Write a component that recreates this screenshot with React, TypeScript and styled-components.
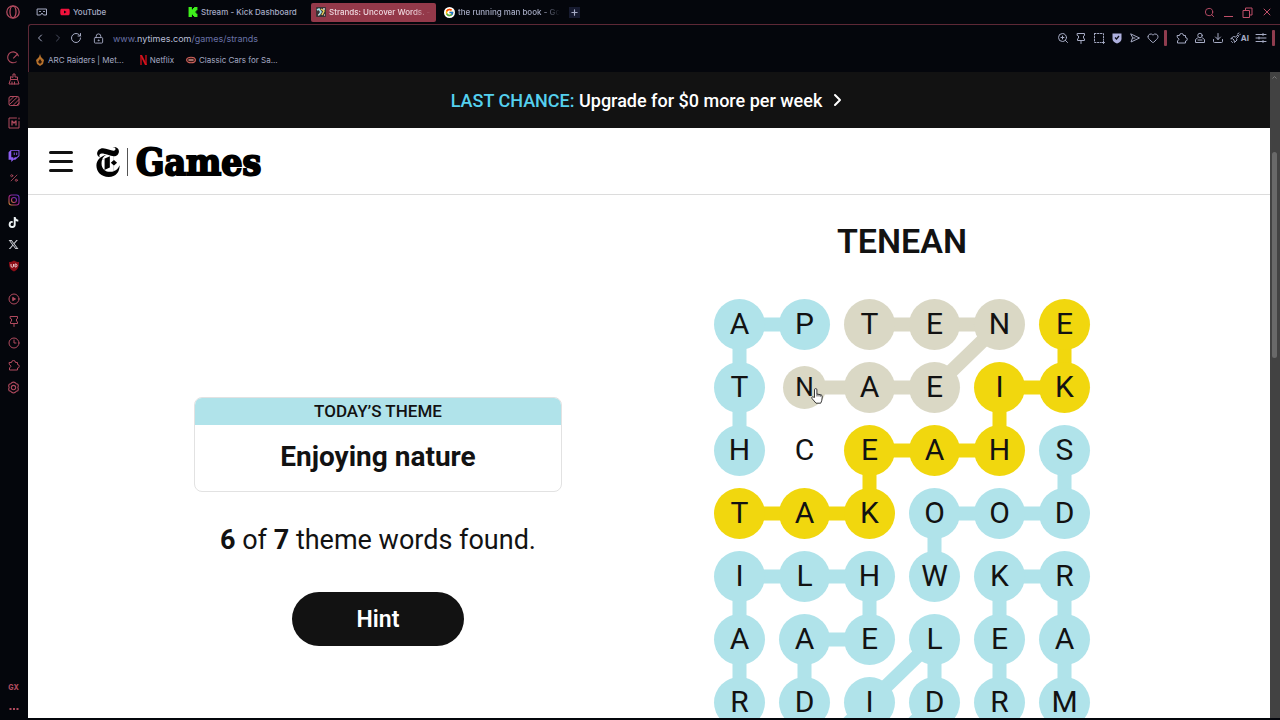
import React from "react";
import styled, { createGlobalStyle, css } from "styled-components";
import {
  Search,
  X,
  ChevronLeft,
  ChevronRight,
  RotateCw,
  LockKeyhole,
  ZoomIn,
  Heart,
  Download,
  Plus,
  Percent,
  Clock3,
} from "lucide-react";
import { FaTwitch, FaTiktok, FaXTwitter, FaYoutube } from "react-icons/fa6";
import { FcGoogle } from "react-icons/fc";
import { SiNewyorktimes, SiKick } from "react-icons/si";

const ACCENT = "#b04a5e";
const CHROME = "#04060c";
const UI_FONT = `Inter, "Liberation Sans", sans-serif`;
const PAGE_FONT = `Roboto, "Liberation Sans", sans-serif`;
const BLUE = "#b0e3ea";
const YELLOW = "#f1d70e";
const SAND = "#dad8c5";

const GlobalStyle = createGlobalStyle`
  *, *::before, *::after { box-sizing: border-box; }
  body { margin: 0; background: ${CHROME}; }
  button { border: 0; padding: 0; background: none; color: inherit; font: inherit; cursor: pointer; }
  a { color: inherit; text-decoration: none; }
  svg { display: block; flex: none; }
`;

const Browser = styled.div`
  display: flex;
  flex-direction: column;
  height: 100vh;
  padding-bottom: 2px;
  overflow: hidden;
  background: ${CHROME};
  color: #a6abc4;
  font-family: ${UI_FONT};
`;

/* ---------- tab strip ---------- */

const TitleBar = styled.header`
  display: flex;
  align-items: center;
  height: 24px;
  padding: 0 7px 0 6px;
`;

const OperaButton = styled.button`
  color: ${ACCENT};
`;

const IslandButton = styled.button`
  margin: 0 7px 0 16px;
`;

const Tabs = styled.nav`
  display: flex;
  gap: 3px;
`;

const Tab = styled.a<{ $active?: boolean; $fade?: boolean }>`
  display: flex;
  align-items: center;
  gap: 3px;
  width: 125px;
  height: 19px;
  padding: 0 5px;
  border-radius: 2px;
  font-size: 8px;
  font-weight: 500;
  white-space: nowrap;
  ${(p) => p.$active && css`background: #94394a; color: #efd9e0;`}
  span {
    flex: 1;
    ${(p) => p.$fade && css`mask-image: linear-gradient(90deg, #000 82%, transparent);`}
  }
`;

const NewTab = styled.button`
  display: grid;
  place-items: center;
  width: 11px;
  height: 11px;
  margin-left: 5px;
  background: #171b30;
`;

const WindowControls = styled.div`
  display: flex;
  gap: 8px;
  margin-left: auto;
  color: #c04f69;
`;

/* ---------- frame ---------- */

const Body = styled.div`
  display: flex;
  flex: 1;
  min-height: 0;
`;

const Sidebar = styled.aside`
  display: flex;
  flex-direction: column;
  align-items: center;
  gap: 21px;
  width: 28px;
  padding: 27px 1px 3px 0;
  color: ${ACCENT};
`;

const SideGroup = styled.div<{ $bottom?: boolean }>`
  display: flex;
  flex-direction: column;
  gap: 10px;
  ${(p) => p.$bottom && css`margin-top: auto;`}
`;

const SideButton = styled.button<{ $color?: string }>`
  display: grid;
  place-items: center;
  width: 13px;
  height: 12px;
  color: ${(p) => p.$color ?? "inherit"};
  font-size: 7px;
  font-weight: 800;
`;

const Window = styled.div`
  display: flex;
  flex: 1;
  flex-direction: column;
  min-width: 0;
`;

const Chrome = styled.div`
  border: 1px solid #5d2836;
  border-width: 1px 0 0 1px;
  border-top-left-radius: 3px;
  height: 48px;
`;

const AddressBar = styled.div`
  display: flex;
  align-items: center;
  height: 26px;
  padding: 0 5px;
`;

const NavButtons = styled.div`
  display: flex;
  gap: 6px;
  margin-right: 11px;
`;

const Url = styled.a`
  margin-left: 9px;
  color: #6a72a6;
  font-size: 9px;
  b { color: #b9bed6; font-weight: 400; }
`;

const Tools = styled.div`
  display: flex;
  align-items: center;
  gap: 6px;
`;

const ToolSpacer = styled.div`
  flex: 1;
`;

const Divider = styled.i<{ $wide?: boolean }>`
  width: 3px;
  height: 16px;
  margin: 0 ${(p) => (p.$wide ? 9 : 0)}px 0 5px;
  border-radius: 1px;
  background: #8f3c4e;
`;

const AiButton = styled.button`
  display: flex;
  align-items: center;
  font-size: 8px;
  font-weight: 700;
`;

const Bookmarks = styled.nav`
  display: flex;
  align-items: flex-start;
  gap: 12px;
  padding: 3px 0 0 6px;
  font-size: 8px;
  line-height: 12px;
  a { display: flex; align-items: center; gap: 3px; white-space: nowrap; }
  a:first-child { margin-right: 4px; }
`;

const Viewport = styled.div`
  display: flex;
  flex: 1;
  min-height: 0;
`;

const ScrollTrack = styled.div`
  width: 10px;
  padding: 3px 3px 0 2px;
  background: #424242;
`;

const ScrollThumb = styled.div`
  height: 206px;
  margin-top: 72px;
  border-radius: 3px;
  background: #696969;
`;

/* ---------- page ---------- */

const Page = styled.div`
  flex: 1;
  min-width: 0;
  overflow: hidden;
  background: #fff;
  color: #121212;
  font-family: ${PAGE_FONT};
`;

const Banner = styled.a`
  display: flex;
  align-items: center;
  justify-content: center;
  gap: 7px;
  height: 56px;
  padding-right: 2px;
  background: #121212;
  color: #fff;
  font-size: 18px;
  font-weight: 500;
  em { color: #55d0ee; font-style: normal; }
`;

const SiteHeader = styled.header`
  display: flex;
  align-items: center;
  height: 67px;
  padding-left: 20px;
  border-bottom: 1px solid #dcdcdc;
`;

const Brand = styled.a`
  display: flex;
  align-items: center;
  margin-left: 19px;
  padding-top: 2px;
  color: #000;
  font: 900 37px/40px "DejaVu Serif Condensed", "DejaVu Serif", serif;
  -webkit-text-stroke: 2px #000;
`;

const BrandRule = styled.i`
  width: 1px;
  height: 28px;
  margin: 0 8px 0 4px;
  background: #555;
`;

const Game = styled.main`
  display: grid;
  grid-template-columns: 1fr 1fr;
  padding: 0 106px 0 88px;
`;

const Status = styled.section`
  display: flex;
  flex-direction: column;
  align-items: center;
  padding-top: 202px;
`;

const ThemeCard = styled.div`
  width: 100%;
  max-width: 368px;
  overflow: hidden;
  border: 1px solid #e2e2e2;
  border-radius: 8px;
  text-align: center;
`;

const ThemeLabel = styled.h2`
  margin: -1px -1px 0;
  background: ${BLUE};
  font-size: 17px;
  font-weight: 500;
  line-height: 28px;
`;

const ThemeTitle = styled.p`
  margin: 0;
  font-size: 28px;
  font-weight: 700;
  line-height: 64px;
  padding-bottom: 2px;
`;

const Progress = styled.p`
  margin: 30px 0 34px;
  font-size: 27px;
  line-height: 36px;
`;

const HintButton = styled.button`
  width: 172px;
  height: 54px;
  border-radius: 27px;
  background: #121212;
  color: #fff;
  font-size: 23px;
  font-weight: 600;
`;

const Play = styled.section`
  display: flex;
  flex-direction: column;
  align-items: center;
  padding-top: 24px;
`;

const CurrentWord = styled.h1`
  margin: 0 0 30px;
  font-size: 34px;
  font-weight: 600;
  line-height: 44px;
`;

const Board = styled.div`
  position: relative;
  display: grid;
  grid-template-columns: repeat(6, 65px);
  grid-auto-rows: 63px;
  place-items: center;
`;

const Links = styled.svg`
  position: absolute;
  inset: 0;
  overflow: visible;
`;

const Letter = styled.button<{ $fill: string; $small?: boolean }>`
  position: relative;
  width: ${(p) => (p.$small ? 43 : 51)}px;
  height: ${(p) => (p.$small ? 43 : 51)}px;
  padding-bottom: 2px;
  border-radius: 50%;
  background: ${(p) => p.$fill};
  font-size: ${(p) => (p.$small ? 26 : 30)}px;
  line-height: 30px;
`;

const Pointer = styled.svg`
  position: absolute;
  left: 28px;
  top: 22px;
`;

const ROWS = ["APTENE", "TNAEIK", "HCEAHS", "TAKOOD", "ILHWKR", "AAELEA", "RDIDRM"];

const FILLS = ["bbsssy", "bsssyy", "b-yyyb", "yyybbb", "bbbbbb", "bbbbbb", "bbbbbb"];

const COLORS: Record<string, string> = { b: BLUE, y: YELLOW, s: SAND, "-": "transparent" };

/* each chain lists the cells it passes as "column row" pairs */
const CHAINS: { color: string; cells: [number, number][] }[] = [
  { color: BLUE, cells: [[1, 0], [0, 0], [0, 1], [0, 2]] },
  { color: SAND, cells: [[2, 0], [3, 0], [4, 0], [3, 1], [2, 1], [1, 1]] },
  { color: YELLOW, cells: [[5, 0], [5, 1], [4, 1], [4, 2], [3, 2], [2, 2], [2, 3], [1, 3], [0, 3]] },
  { color: BLUE, cells: [[5, 2], [5, 3], [4, 3], [3, 3], [3, 4]] },
  { color: BLUE, cells: [[0, 6], [0, 5], [0, 4], [1, 4], [2, 4], [2, 5], [1, 5], [1, 6]] },
  { color: BLUE, cells: [[1, 7], [2, 6], [3, 5], [3, 6], [2, 7]] },
  { color: BLUE, cells: [[4, 6], [4, 5], [4, 4], [5, 4], [5, 5], [5, 6]] },
];

const toPoints = (cells: [number, number][]) =>
  cells.map(([c, r]) => `${c * 65 + 32.5},${r * 63 + 31.5}`).join(" ");

/* ---------- small drawings ---------- */

const line = {
  fill: "none",
  stroke: "currentColor",
  strokeWidth: 2,
  strokeLinecap: "round" as const,
  strokeLinejoin: "round" as const,
};

const OperaIcon = () => (
  <svg width="14" height="14" viewBox="0 0 14 14" fill="none" stroke="currentColor" strokeWidth="1.3">
    <circle cx="7" cy="7" r="6.2" />
    <ellipse cx="7" cy="7" rx="3" ry="5.800" />
  </svg>
);
const IslandIcon = () => (
  <svg width="12" height="12" viewBox="0 0 24 24" {...line}>
    <path d="M3 6h18v12h-6l-3-4-3 4H3z" />
    <path d="M7 11h2M15 11h2" />
  </svg>
);
const StrandsIcon = () => (
  <svg width="10" height="10" viewBox="0 0 10 10">
    <rect width="10" height="10" rx="1" fill="#3b3335" />
    <path d="M1 3l2-1 2 3-2 3" stroke="#9fe0e6" strokeWidth="1.6" fill="none" />
    <path d="M5 2l3 2-2 4" stroke="#e8d35a" strokeWidth="1.4" fill="none" />
    <path d="M8 1v2M2 8h1M8 8h1" stroke="#fff" strokeWidth="1.2" />
  </svg>
);
const GoogleIcon = () => (
  <svg width="11" height="11" viewBox="0 0 48 48">
    <circle cx="24" cy="24" r="24" fill="#fff" />
    <FcGoogle x={4} y={4} size={40} />
  </svg>
);
const FlameIcon = () => (
  <svg width="10" height="12" viewBox="0 0 10 12">
    <path d="M5 0l1 3 3 3-1 4-3 2-3-2-1-4 3-3z" fill="#b5712c" />
    <path d="M5 5l2 3-2 2-2-2z" fill="#2a1408" />
  </svg>
);
const NetflixIcon = () => (
  <svg width="7" height="10" viewBox="0 0 7 10">
    <path d="M0 0h2v10H0zM5 0h2v10H5z" fill="#8d0b13" />
    <path d="M0 0h2l5 10H5z" fill="#d5121d" />
  </svg>
);
const RingIcon = () => (
  <svg width="10" height="8" viewBox="0 0 10 8">
    <ellipse cx="5" cy="4" rx="4.4" ry="2.8" fill="#3a1614" stroke="#d0625c" strokeWidth="1.1" />
    <path d="M2.5 4h5" stroke="#e6b0aa" strokeWidth="1.2" />
  </svg>
);
const ShieldIcon = () => (
  <svg width="12" height="12" viewBox="0 0 24 24">
    <path d="M3 3h18v11c0 4-4 7-9 9-5-2-9-5-9-9z" fill="#aeb0de" />
    <path d="M8 11l3 3 5-6" fill="none" stroke="#0a0c18" strokeWidth="2.4" />
  </svg>
);
const SnapshotIcon = () => (
  <svg width="12" height="12" viewBox="0 0 24 24" {...line}>
    <path d="M3 3h18v13M3 3v18h13" strokeDasharray="3 3" />
    <path d="M21 18v5M18 21h5" />
  </svg>
);
const SendIcon = () => (
  <svg width="12" height="12" viewBox="0 0 24 24" {...line}>
    <path d="M4 4l17 8-17 8 3-8zM7 12h5" />
  </svg>
);
const PinIcon = () => (
  <svg width="12" height="12" viewBox="0 0 24 24" {...line}>
    <path d="M5 3h14v4l-2 1v4l2 2v3H5v-3l2-2V8L5 7zM12 17v6" />
  </svg>
);
const PuzzleIcon = () => (
  <svg width="12" height="12" viewBox="0 0 24 24" {...line}>
    <path d="M3 7h4a4 4 0 0 1 8 0h4v4a3.500 3.500 0 0 1 0 7v4H3v-4l3-3.500-3-3.500z" />
  </svg>
);
const ProfileIcon = () => (
  <svg width="12" height="12" viewBox="0 0 24 24" {...line}>
    <circle cx="12" cy="7" r="4.5" />
    <path d="M7 12l-4 3v6h18v-6l-4-3M8 16h8" />
  </svg>
);
const RocketIcon = () => (
  <svg width="11" height="12" viewBox="0 0 22 24" {...line}>
    <path d="M2 13l5-4 4 1 5-4 1 3-4 4 1 3-5 5-1-5-2-2zM15 4l3-2M19 6l2-2M3 19l2 2" />
  </svg>
);
const TuneIcon = () => (
  <svg width="12" height="12" viewBox="0 0 24 24" {...line}>
    <path d="M2 5h20M2 12h20M2 19h20M16 3v4M8 10v4M16 17v4" />
  </svg>
);
const GaugeIcon = () => (
  <svg width="13" height="13" viewBox="0 0 24 24" {...line}>
    <path d="M17 20a10 10 0 1 1 4-11M12 13l7-7" />
  </svg>
);
const CleanerIcon = () => (
  <svg width="12" height="12" viewBox="0 0 24 24" {...line}>
    <path d="M10 8V2h4v6h5v5H5V8zM5 13l-3 9h20l-3-9M8 22v-4M13 22v-4" />
  </svg>
);
const PatternIcon = () => (
  <svg width="12" height="12" viewBox="0 0 24 24" {...line}>
    <rect x="2" y="3" width="20" height="18" rx="3" />
    <path d="M3 12l9-9M3 19L19 4M10 21L22 9M17 21l5-5" />
  </svg>
);
const ModsIcon = () => (
  <svg width="12" height="12" viewBox="0 0 24 24" {...line}>
    <path d="M17 2H2v20h20V9M22 2v2" />
    <path d="M8 16V8l4 4 4-4v8" strokeWidth="2.6" />
  </svg>
);
const CameraIcon = () => (
  <svg width="12" height="12" viewBox="0 0 24 24" fill="none" stroke="url(#camera)" strokeWidth="2.2">
    <defs>
      <linearGradient id="camera" x1="1" y1="0" x2="0" y2="1">
        <stop offset="0" stopColor="#5a2fc4" />
        <stop offset="0.6" stopColor="#a8267f" />
        <stop offset="1" stopColor="#c98a2c" />
      </linearGradient>
    </defs>
    <rect x="2" y="2" width="20" height="20" rx="5" />
    <circle cx="12" cy="12" r="5" />
    <path d="M17 6.500h1" />
  </svg>
);
const BlockerIcon = () => (
  <svg width="12" height="12" viewBox="0 0 24 24">
    <path d="M12 1c4 3 7 3 10 3 0 10-2 15-10 19C4 19 2 14 2 4c3 0 6 0 10-3z" fill="#8d0d17" />
    <path d="M6 8v4a2 2 0 0 0 5 0V8M14 8v6h1a3 3 0 0 0 0-6z" fill="none" stroke="#e9c9cc" strokeWidth="2" />
  </svg>
);
const PlayerIcon = () => (
  <svg width="12" height="12" viewBox="0 0 24 24" {...line}>
    <circle cx="12" cy="12" r="10" />
    <path d="M10 9l5 3-5 3z" fill="currentColor" />
  </svg>
);
const NutIcon = () => (
  <svg width="13" height="13" viewBox="0 0 24 24" {...line}>
    <path d="M9 3l3-1 3 1 2 2 3 1 1 3-1 3 1 3-1 3-3 1-2 2-3 1-3-1-2-2-3-1-1-3 1-3-1-3 1-3 3-1z" />
    <circle cx="12" cy="12" r="4" />
  </svg>
);
const DotsIcon = () => (
  <svg width="12" height="4" viewBox="0 0 12 4" fill="currentColor">
    <path d="M1.500 1h2v2h-2zM5 1h2v2H5zM8.500 1h2v2h-2z" />
  </svg>
);

const TABS = [
  { label: "YouTube", icon: <FaYoutube size={10} color="#f0123c" /> },
  { label: "Stream - Kick Dashboard", icon: <SiKick size={10} color="#3ff01c" /> },
  { label: "Strands: Uncover Words. -", icon: <StrandsIcon />, active: true, fade: true },
  { label: "the running man book - Go", icon: <GoogleIcon />, fade: true },
];

export default function App() {
  return (
    <Browser>
      <GlobalStyle />
      <TitleBar>
        <OperaButton aria-label="Opera menu"><OperaIcon /></OperaButton>
        <IslandButton aria-label="Workspaces"><IslandIcon /></IslandButton>
        <Tabs>
          {TABS.map((t) => (
            <Tab key={t.label} href="#" $active={t.active} $fade={t.fade}>
              {t.icon}
              <span>{t.label}</span>
            </Tab>
          ))}
        </Tabs>
        <NewTab aria-label="New tab"><Plus size={9} strokeWidth={3} /></NewTab>
        <WindowControls>
          <button aria-label="Search tabs"><Search size={11} /></button>
          <button aria-label="Minimise"><svg width="11" height="11" viewBox="0 0 11 11"><path d="M1 9.500h9" stroke="currentColor" /></svg></button>
          <button aria-label="Restore"><svg width="11" height="11" viewBox="0 0 11 11" fill="none" stroke="currentColor"><path d="M1 3.500h6.500v7H1zM3.500 3.500v-2.500h6.500v7H7.500" /></svg></button>
          <button aria-label="Close"><X size={12} strokeWidth={2} /></button>
        </WindowControls>
      </TitleBar>

      <Body>
        <Sidebar>
          <SideGroup>
            <SideButton aria-label="GX Control"><GaugeIcon /></SideButton>
            <SideButton aria-label="GX Cleaner"><CleanerIcon /></SideButton>
            <SideButton aria-label="Wallpapers"><PatternIcon /></SideButton>
            <SideButton aria-label="Mods"><ModsIcon /></SideButton>
          </SideGroup>
          <SideGroup>
            <SideButton aria-label="Twitch" $color="#8d5cf0"><FaTwitch size={12} /></SideButton>
            <SideButton aria-label="Deals"><Percent size={10} /></SideButton>
            <SideButton aria-label="Instagram"><CameraIcon /></SideButton>
            <SideButton aria-label="TikTok" $color="#eef3f5"><FaTiktok size={11} /></SideButton>
            <SideButton aria-label="X" $color="#c9cbd2"><FaXTwitter size={11} /></SideButton>
            <SideButton aria-label="Ad blocker"><BlockerIcon /></SideButton>
          </SideGroup>
          <SideGroup>
            <SideButton aria-label="Player"><PlayerIcon /></SideButton>
            <SideButton aria-label="Pinboards"><PinIcon /></SideButton>
            <SideButton aria-label="History"><Clock3 size={12} /></SideButton>
            <SideButton aria-label="Extensions"><PuzzleIcon /></SideButton>
            <SideButton aria-label="Settings"><NutIcon /></SideButton>
          </SideGroup>
          <SideGroup $bottom>
            <SideButton>GX</SideButton>
            <SideButton aria-label="More"><DotsIcon /></SideButton>
          </SideGroup>
        </Sidebar>

        <Window>
          <Chrome>
            <AddressBar>
              <NavButtons>
                <button aria-label="Back"><ChevronLeft size={12} /></button>
                <button aria-label="Forward"><ChevronRight size={12} color="#4a4e60" /></button>
                <button aria-label="Reload"><RotateCw size={12} /></button>
              </NavButtons>
              <LockKeyhole size={11} />
              <Url href="#">www.<b>nytimes.com</b>/games/strands</Url>
              <ToolSpacer />
              <Tools>
                <button aria-label="Zoom"><ZoomIn size={12} /></button>
                <button aria-label="Pin page"><PinIcon /></button>
                <button aria-label="Snapshot"><SnapshotIcon /></button>
                <button aria-label="Privacy"><ShieldIcon /></button>
                <button aria-label="Send"><SendIcon /></button>
                <button aria-label="Favourite"><Heart size={12} /></button>
              </Tools>
              <Divider $wide />
              <Tools>
                <button aria-label="Extensions"><PuzzleIcon /></button>
                <button aria-label="Profile"><ProfileIcon /></button>
                <button aria-label="Downloads"><Download size={12} /></button>
                <AiButton><RocketIcon />AI</AiButton>
                <button aria-label="Easy setup"><TuneIcon /></button>
              </Tools>
              <Divider />
            </AddressBar>
            <Bookmarks>
              <a href="#"><FlameIcon />ARC Raiders | Met...</a>
              <a href="#"><NetflixIcon />Netflix</a>
              <a href="#"><RingIcon />Classic Cars for Sa...</a>
            </Bookmarks>
          </Chrome>

          <Viewport>
            <Page>
              <Banner href="#">
                <span><em>LAST CHANCE:</em> Upgrade for $0 more per week</span>
                <svg width="16" height="16" viewBox="0 0 16 16" {...line}><path d="M6 3l5 5-5 5" /></svg>
              </Banner>
              <SiteHeader>
                <button aria-label="Menu">
                  <svg width="26" height="24" viewBox="0 0 26 24" {...line} strokeWidth={3}>
                    <path d="M2.500 3.500h21M2.500 12.500h21M2.500 21.500h21" />
                  </svg>
                </button>
                <Brand href="#">
                  <SiNewyorktimes size={30} strokeWidth={0} />
                  <BrandRule />
                  Games
                </Brand>
              </SiteHeader>

              <Game>
                <Status>
                  <ThemeCard>
                    <ThemeLabel>TODAY’S THEME</ThemeLabel>
                    <ThemeTitle>Enjoying nature</ThemeTitle>
                  </ThemeCard>
                  <Progress><b>6</b> of <b>7</b> theme words found.</Progress>
                  <HintButton>Hint</HintButton>
                </Status>

                <Play>
                  <CurrentWord>TENEAN</CurrentWord>
                  <Board>
                    <Links width="390" height="441" viewBox="0 0 390 441">
                      {CHAINS.map((c, i) => (
                        <polyline key={i} points={toPoints(c.cells)} fill="none" stroke={c.color} strokeWidth="14" />
                      ))}
                    </Links>
                    {ROWS.flatMap((row, r) =>
                      row.split("").map((ch, c) => {
                        const last = r === 1 && c === 1;
                        return (
                          <Letter key={`${r}-${c}`} $fill={COLORS[FILLS[r][c]]} $small={last}>
                            {ch}
                            {last && (
                              <Pointer width="12" height="16" viewBox="0 0 12 16">
                                <path
                                  d="M3.500 9.500V1.800a1.200 1.200 0 0 1 2.400 0V6l4 .8c1 .3 1.500 1 1.400 2l-.6 4-1 2.400H5L1 10.500c-.8-1 .2-2 1.200-1.500z"
                                  fill="#fff"
                                  stroke="#222"
                                  strokeWidth=".9"
                                />
                                <path d="M6 6v2.500M8 6.500v2M9.800 7v1.800" stroke="#222" strokeWidth=".8" />
                              </Pointer>
                            )}
                          </Letter>
                        );
                      })
                    )}
                  </Board>
                </Play>
              </Game>
            </Page>
            <ScrollTrack>
              <svg width="5" height="5" viewBox="0 0 5 5"><path d="M.5 3.500l2-2 2 2" stroke="#777" fill="none" /></svg>
              <ScrollThumb />
            </ScrollTrack>
          </Viewport>
        </Window>
      </Body>
    </Browser>
  );
}
